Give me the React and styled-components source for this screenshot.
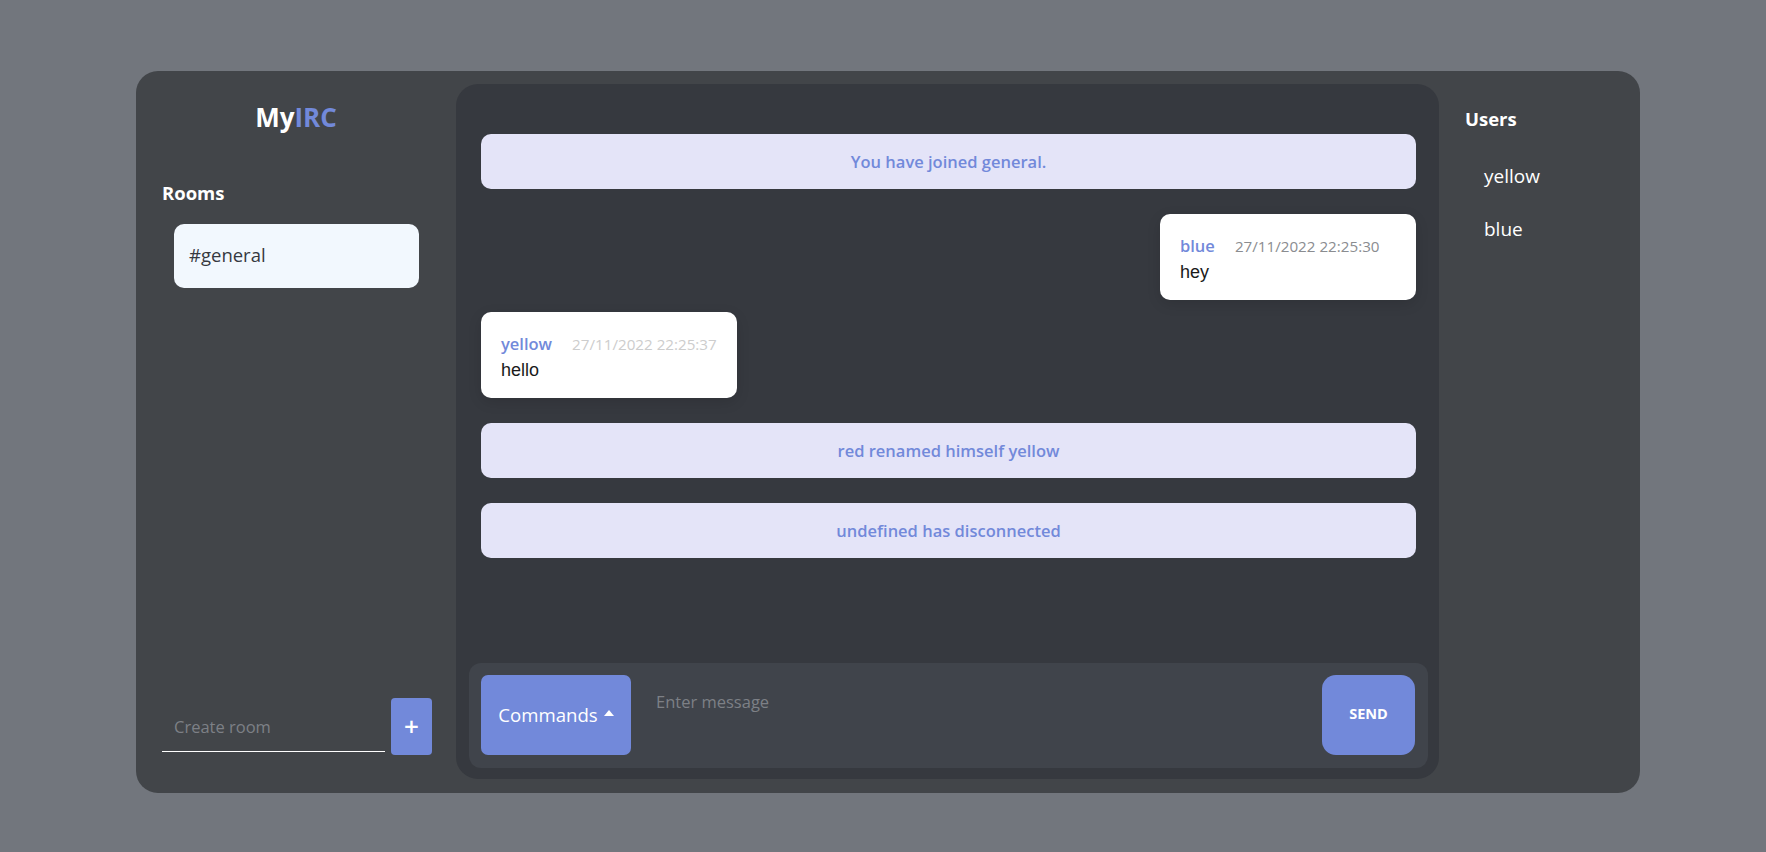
import React from "react";
import styled, { createGlobalStyle } from "styled-components";

const GlobalStyle = createGlobalStyle`
  html, body { margin: 0; padding: 0; }
  body {
    background: #72767d;
    font-family: "Open Sans", "Noto Sans", sans-serif;
    height: 852px;
    overflow: hidden;
  }
  * { box-sizing: border-box; }
`;

const Page = styled.div`
  padding: 71px 126px 59px 136px;
  height: 852px;
`;

const Shell = styled.div`
  display: grid;
  grid-template-columns: 320px 983px 1fr;
  height: 722px;
  background: #424549;
  border-radius: 22px;
`;

const Sidebar = styled.aside`
  display: flex;
  flex-direction: column;
  padding: 28px 0 41px 26px;
`;

const Logo = styled.h1`
  margin: 0;
  text-align: center;
  font-size: 26px;
  font-weight: 700;
  line-height: 36px;
  color: #ffffff;
  padding-right: 26px;
  span { color: #7289da; }
`;

const SectionTitle = styled.h3`
  margin: ${(p) => p.$mt || 0}px 0 0 0;
  font-size: 18.5px;
  font-weight: 700;
  line-height: 24px;
  color: #ffffff;
`;

const RoomCard = styled.div`
  margin: 19px 0 0 12px;
  width: 245px;
  height: 64px;
  display: flex;
  align-items: center;
  padding: 0 0 3px 15px;
  background: #f2f8fe;
  border-radius: 10px;
  font-size: 18.5px;
  color: #36393f;
`;

const Spacer = styled.div`
  flex: 1;
`;

const CreateRow = styled.form`
  display: flex;
  align-items: flex-end;
  gap: 6px;
`;

const CreateInput = styled.input`
  width: 223px;
  height: 44px;
  background: transparent;
  border: none;
  border-bottom: 1.5px solid #ffffff;
  padding: 0 12px 6px;
  font-family: "Open Sans", "Noto Sans", sans-serif;
  font-size: 16.5px;
  color: #ffffff;
  outline: none;
  &::placeholder { color: #7d8086; }
`;

const PlusButton = styled.button`
  width: 41px;
  height: 57px;
  margin-bottom: -3px;
  border: none;
  border-radius: 4px;
  background: #7289da;
  color: #ffffff;
  font-family: "Open Sans", "Noto Sans", sans-serif;
  font-size: 26px;
  font-weight: 600;
  line-height: 1;
  display: flex;
  align-items: center;
  justify-content: center;
  padding: 0 0 2px;
`;

const ChatPanel = styled.main`
  margin: 13px 0 14px;
  background: #36393f;
  border-radius: 22px;
  display: flex;
  flex-direction: column;
  padding: 0 11px 11px 13px;
  min-height: 0;
`;

const MessageList = styled.div`
  flex: 1;
  padding: 25px 12px 0 12px;
  overflow: hidden;
`;

const SystemMessage = styled.div`
  margin: 25px 0;
  height: 55px;
  display: flex;
  align-items: center;
  justify-content: center;
  background: #e4e4f8;
  border-radius: 10px;
  color: #7289da;
  font-size: 16.5px;
  font-weight: 600;
`;

const MessageRow = styled.div`
  margin: 12px 0;
  display: flex;
  justify-content: ${(p) => (p.$own ? "flex-end" : "flex-start")};
`;

const Bubble = styled.div`
  min-width: 256px;
  background: #ffffff;
  border-radius: 10px;
  padding: 21px 18px 16px 20px;
  box-shadow: 0 4px 14px rgba(0, 0, 0, 0.12);
`;

const BubbleHeader = styled.div`
  display: flex;
  align-items: baseline;
  gap: 20px;
  line-height: 22px;
`;

const Author = styled.span`
  font-size: 16.5px;
  font-weight: 600;
  color: #7289da;
`;

const Time = styled.span`
  font-size: 15.2px;
  color: ${(p) => (p.$own ? "#8a8c90" : "#cdcdcd")};
`;

const Body = styled.div`
  margin-top: 3px;
  font-family: "Liberation Sans", Arial, sans-serif;
  font-size: 18px;
  line-height: 24px;
  color: #1a1a1a;
`;

const InputBar = styled.div`
  height: 105px;
  background: #40444b;
  border-radius: 12px;
  display: flex;
  align-items: stretch;
  padding: 12px 13px 13px 12px;
`;

const CommandsButton = styled.button`
  width: 150px;
  border: none;
  border-radius: 7px;
  background: #7289da;
  color: #ffffff;
  font-family: "Open Sans", "Noto Sans", sans-serif;
  font-size: 18.6px;
  display: flex;
  align-items: center;
  justify-content: center;
  gap: 6px;
  padding: 0 0 2px;
`;

const Caret = styled.span`
  width: 0;
  height: 0;
  border-left: 5.5px solid transparent;
  border-right: 5.5px solid transparent;
  border-bottom: 6px solid #ffffff;
  margin-top: -3px;
`;

const MessageInput = styled.textarea`
  flex: 1;
  margin-left: 13px;
  background: transparent;
  border: none;
  resize: none;
  outline: none;
  padding: 15px 12px;
  font-family: "Open Sans", "Noto Sans", sans-serif;
  font-size: 16.5px;
  color: #ffffff;
  &::placeholder { color: #7d8086; }
`;

const SendButton = styled.button`
  width: 93px;
  border: none;
  border-radius: 14px;
  background: #7289da;
  color: #ffffff;
  font-family: "Open Sans", "Noto Sans", sans-serif;
  font-size: 14.5px;
  font-weight: 700;
  padding: 0 0 3px;
`;

const UsersPanel = styled.aside`
  padding: 36px 0 0 26px;
`;

const UserList = styled.ul`
  list-style: none;
  margin: 19px 0 0;
  padding: 0 0 0 19px;
`;

const UserItem = styled.li`
  font-size: 19px;
  line-height: 53px;
  color: #ffffff;
`;

const messages = [
  { type: "system", text: "You have joined general." },
  { type: "user", own: true, author: "blue", time: "27/11/2022 22:25:30", text: "hey" },
  { type: "user", own: false, author: "yellow", time: "27/11/2022 22:25:37", text: "hello" },
  { type: "system", text: "red renamed himself yellow" },
  { type: "system", text: "undefined has disconnected" },
];

export default function App() {
  return (
    <>
      <GlobalStyle />
      <Page>
        <Shell>
          <Sidebar>
            <Logo>
              My<span>IRC</span>
            </Logo>
            <SectionTitle $mt={46}>Rooms</SectionTitle>
            <RoomCard>#general</RoomCard>
            <Spacer />
            <CreateRow onSubmit={(e) => e.preventDefault()}>
              <CreateInput placeholder="Create room" />
              <PlusButton type="submit">+</PlusButton>
            </CreateRow>
          </Sidebar>

          <ChatPanel>
            <MessageList>
              {messages.map((m, i) =>
                m.type === "system" ? (
                  <SystemMessage key={i}>{m.text}</SystemMessage>
                ) : (
                  <MessageRow key={i} $own={m.own}>
                    <Bubble>
                      <BubbleHeader>
                        <Author>{m.author}</Author>
                        <Time $own={m.own}>{m.time}</Time>
                      </BubbleHeader>
                      <Body>{m.text}</Body>
                    </Bubble>
                  </MessageRow>
                )
              )}
            </MessageList>
            <InputBar>
              <CommandsButton type="button">
                Commands <Caret />
              </CommandsButton>
              <MessageInput placeholder="Enter message" />
              <SendButton type="button">SEND</SendButton>
            </InputBar>
          </ChatPanel>

          <UsersPanel>
            <SectionTitle>Users</SectionTitle>
            <UserList>
              <UserItem>yellow</UserItem>
              <UserItem>blue</UserItem>
            </UserList>
          </UsersPanel>
        </Shell>
      </Page>
    </>
  );
}
